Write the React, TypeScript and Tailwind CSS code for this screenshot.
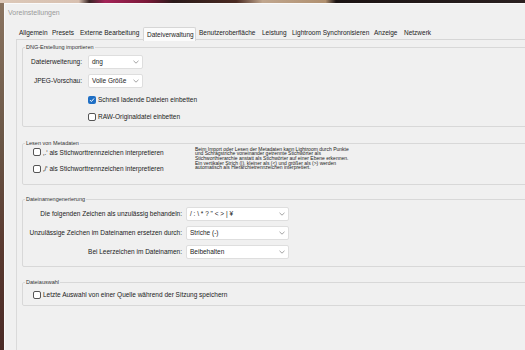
import React from 'react';

const tabs = [
  { label: 'Allgemein', w: 'w-[33px]' },
  { label: 'Presets', w: 'w-[28px]' },
  { label: 'Externe Bearbeitung', w: 'w-[66px]' },
  { label: 'Dateiverwaltung', w: 'w-[53px]', active: true },
  { label: 'Benutzeroberfläche', w: 'w-[63px]' },
  { label: 'Leistung', w: 'w-[30px]' },
  { label: 'Lightroom Synchronisieren', w: 'w-[82px]' },
  { label: 'Anzeige', w: 'w-[30px]' },
  { label: 'Netzwerk', w: 'w-[33px]' },
];

const Chevron = () => (
  <svg width="6" height="4" viewBox="0 0 6 4" className="shrink-0">
    <path d="M0.5 0.8 L3 3.2 L5.5 0.8" fill="none" stroke="#8a8a8a" strokeWidth="0.8" />
  </svg>
);

const Select: React.FC<{ value: string; w: string }> = ({ value, w }) => (
  <div className={`${w} h-[14px] bg-white border border-[#dedede] rounded-[2px] flex items-center justify-between pl-[3px] pr-[3px] text-[#1a1a1a]`}>
    <span>{value}</span>
    <Chevron />
  </div>
);

const Check: React.FC<{ checked?: boolean }> = ({ checked }) =>
  checked ? (
    <div className="w-[8px] h-[8px] rounded-[2px] bg-[#1f6fc5] flex items-center justify-center shrink-0">
      <svg width="6" height="6" viewBox="0 0 6 6">
        <path d="M1 3.1 L2.4 4.5 L5 1.5" fill="none" stroke="white" strokeWidth="1" />
      </svg>
    </div>
  ) : (
    <div className="w-[8px] h-[8px] rounded-[2px] border border-[#555] bg-white shrink-0" />
  );

const Group: React.FC<{ title: string; className?: string; children: React.ReactNode }> = ({ title, className, children }) => (
  <fieldset className={`border border-[#d8d8d8] rounded-[2px] w-[600px] ${className ?? ''}`}>
    <legend className="ml-[2px] px-[1px] text-[5.5px] leading-[7px] text-[#333]">{title}</legend>
    {children}
  </fieldset>
);

export default function App() {
  return (
    <div className="w-[525px] h-[350px] overflow-hidden flex flex-col bg-[linear-gradient(90deg,#dcc8b8_0%,#d8c0b0_15%,#3a2626_17%,#a42458_20%,#7a1838_28%,#2a1a1a_33%,#4a2a22_45%,#c0a68e_50%,#b09070_62%,#1c1414_64%,#2a2020_100%)] font-['Liberation_Sans',Arial,sans-serif]">
      <div className="h-[3px] shrink-0" />
      <div className="flex-1 flex min-h-0">
        <div className="w-[4px] shrink-0 bg-[linear-gradient(180deg,#8a7460_0%,#6a5646_40%,#5a3a30_70%,#4a2a26_100%)]" />
        <div className="flex-1 bg-[#f0f0f0] border-l border-t border-[#fafafa] flex flex-col min-w-0 overflow-hidden">
          <div className="h-[18px] shrink-0 flex items-center pl-[3px] text-[7px] text-[#9a9a9a]">Voreinstellungen</div>

          <div className="flex mt-[5px] ml-[11px] text-[6.5px] text-[#222] h-[13px] shrink-0">
            {tabs.map((t) => (
              <div
                key={t.label}
                className={`${t.w} shrink-0 pl-[3px] flex items-center whitespace-nowrap ${t.active ? 'bg-[#fbfbfb] border border-b-0 border-[#d6d6d6] rounded-t-[2px] relative z-10 -mb-[1px]' : 'border-b border-[#d6d6d6]'}`}
              >
                {t.label}
              </div>
            ))}
            <div className="flex-1 border-b border-[#d6d6d6]" />
          </div>

          <div className="ml-[11px] flex-1 border-l border-[#dadada] bg-[#f0f0f0] pl-[5px] pt-[4px] text-[6.5px] text-[#1a1a1a] overflow-hidden">
            <Group title="DNG-Erstellung importieren" className="pb-[4px]">
              <div className="grid grid-cols-[59px_55px] gap-x-[6px] gap-y-[4px] items-center mt-[4px]">
                <span className="text-right">Dateierweiterung:</span>
                <Select value="dng" w="w-[55px]" />
                <span className="text-right">JPEG-Vorschau:</span>
                <div className="h-[15px] flex items-center">
                  <Select value="Volle Größe" w="w-[55px]" />
                </div>
              </div>
              <div className="ml-[65px] mt-[7px] flex flex-col gap-[7px]">
                <div className="flex items-center gap-[2px]">
                  <Check checked />
                  <span>Schnell ladende Dateien einbetten</span>
                </div>
                <div className="flex items-center gap-[2px]">
                  <Check />
                  <span>RAW-Originaldatei einbetten</span>
                </div>
              </div>
            </Group>

            <Group title="Lesen von Metadaten" className="mt-[13px] pb-[10px]">
              <div className="flex">
                <div className="w-[172px] pl-[10px] pt-[1px] flex flex-col gap-[7px]">
                  <div className="flex items-center gap-[2px]">
                    <Check />
                    <span>‚.‘ als Stichworttrennzeichen interpretieren</span>
                  </div>
                  <div className="flex items-center gap-[2px]">
                    <Check />
                    <span>‚/‘ als Stichworttrennzeichen interpretieren</span>
                  </div>
                </div>
                <p className="w-[185px] text-[5px] leading-[4.7px] text-[#222]">
                  Beim Import oder Lesen der Metadaten kann Lightroom durch Punkte
                  <br />
                  und Schrägstriche voneinander getrennte Stichwörter als
                  <br />
                  Stichworthierarchie anstatt als Stichwörter auf einer Ebene erkennen.
                  <br />
                  Ein vertikaler Strich (|), kleiner als (&lt;) und größer als (&gt;) werden
                  <br />
                  automatisch als Hierarchietrennzeichen interpretiert.
                </p>
              </div>
            </Group>

            <Group title="Dateinamengenerierung" className="mt-[11px] pb-[7px]">
              <div className="grid grid-cols-[159px_103px] gap-x-[4px] gap-y-[5px] items-center mt-[4px]">
                <span className="text-right">Die folgenden Zeichen als unzulässig behandeln:</span>
                <Select value={'/ : \\ * ? " < > | ¥'} w="w-[103px]" />
                <span className="text-right">Unzulässige Zeichen im Dateinamen ersetzen durch:</span>
                <Select value="Striche (-)" w="w-[103px]" />
                <span className="text-right">Bei Leerzeichen im Dateinamen:</span>
                <Select value="Beibehalten" w="w-[103px]" />
              </div>
            </Group>

            <Group title="Dateiauswahl" className="mt-[12px] pb-[5px]">
              <div className="pl-[10px] pt-[4px] flex items-center gap-[2px]">
                <Check />
                <span>Letzte Auswahl von einer Quelle während der Sitzung speichern</span>
              </div>
            </Group>
          </div>
        </div>
      </div>
    </div>
  );
}
